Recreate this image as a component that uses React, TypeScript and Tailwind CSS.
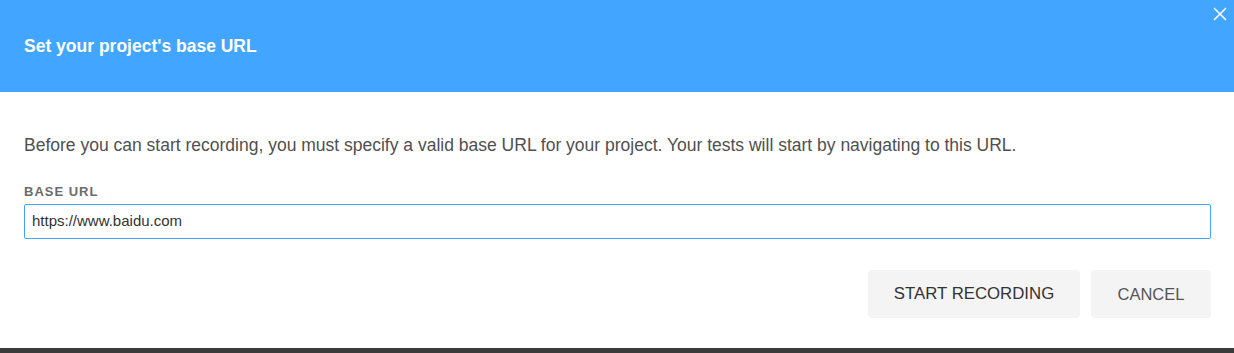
import React from "react";

export default function App() {
  return (
    <div className="w-[1234px] h-[353px] flex flex-col bg-[#3b3b3b]" style={{ fontFamily: '"Liberation Sans", Arial, sans-serif' }}>
      <div className="h-[348px] bg-white flex flex-col">
        <div className="h-[92px] bg-[#42a5ff] relative flex items-center px-6">
          <h1 className="text-white text-[17.5px] font-bold leading-5">Set your project's base URL</h1>
          <button className="absolute right-[6px] top-[6px] w-[16px] h-[16px] flex items-center justify-center">
            <svg width="14" height="14" viewBox="0 0 14 14" fill="none">
              <path d="M1 1L13 13M13 1L1 13" stroke="white" strokeWidth="1.6" />
            </svg>
          </button>
        </div>
        <div className="pl-6 pr-[23px] pt-[41px] flex flex-col">
          <p className="text-[17.5px] leading-6 text-[#505050] whitespace-nowrap">
            Before you can start recording, you must specify a valid base URL for your project. Your tests will start by navigating to this URL.
          </p>
          <label className="mt-[27px] text-[13px] leading-4 font-bold text-[#6b6b6b] tracking-[1px]">BASE URL</label>
          <div className="mt-[4px] h-[35px] border border-[#42a5ff] rounded-[2px] flex items-center px-[7px]">
            <span className="text-[15px] text-[#333]">https://www.baidu.com</span>
          </div>
          <div className="mt-[31px] flex justify-end gap-[11px]">
            <button className="w-[212px] h-[48px] bg-[#f4f4f4] rounded-[4px] text-[16.8px] text-[#333]">START RECORDING</button>
            <button className="w-[120px] h-[48px] bg-[#f4f4f4] rounded-[4px] text-[16.5px] text-[#555]">CANCEL</button>
          </div>
        </div>
      </div>
    </div>
  );
}
